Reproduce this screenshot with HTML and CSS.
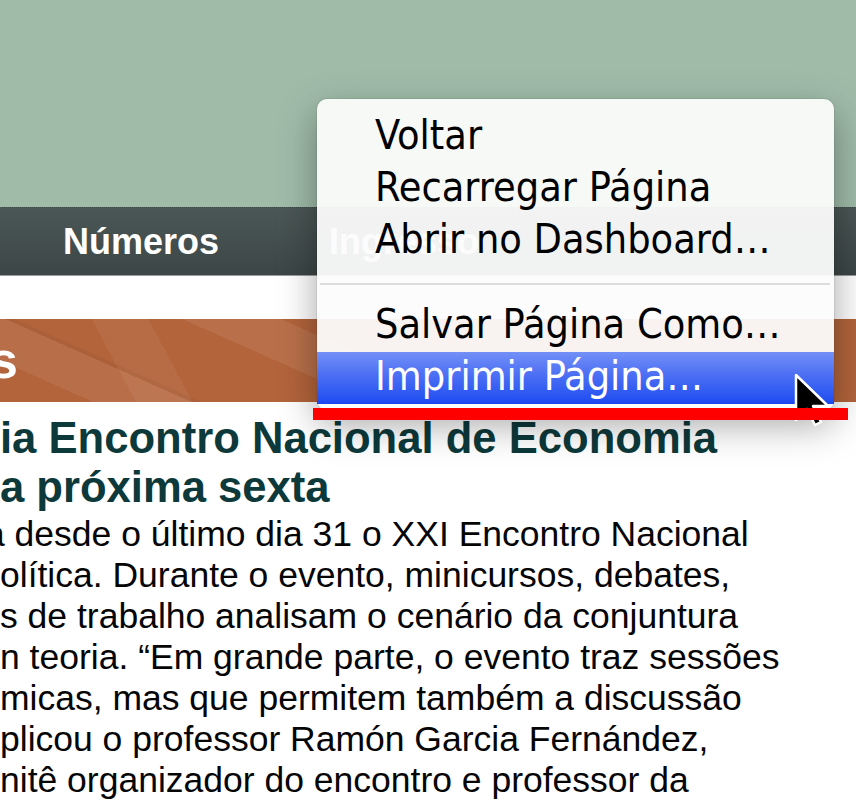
FILE: index.html
```html
<!DOCTYPE html>
<html lang="pt">
<head>
<meta charset="utf-8">
<title>Menu de contexto</title>
<link rel="stylesheet" href="styles.css">
</head>
<body>
<div class="page">
  <header class="top"></header>
  <nav class="nav">
    <a class="nav-link">Números</a>
    <a class="nav-link">Ingresso</a>
  </nav>
  <div class="spacer"></div>
  <section class="banner"><h2 class="banner-title">s</h2></section>
  <article class="story">
    <h1 class="headline">
      <span class="line">ia Encontro Nacional de Economia</span>
      <span class="line">a próxima sexta</span>
    </h1>
    <p class="text">
      <span class="line first">a desde o último dia 31 o XXI Encontro Nacional</span>
      <span class="line">olítica. Durante o evento, minicursos, debates,</span>
      <span class="line">s de trabalho analisam o cenário da conjuntura</span>
      <span class="line">n teoria. “Em grande parte, o evento traz sessões</span>
      <span class="line">micas, mas que permitem também a discussão</span>
      <span class="line">plicou o professor Ramón Garcia Fernández,</span>
      <span class="line">nitê organizador do encontro e professor da</span>
    </p>
  </article>

  <div class="menu">
    <div class="item">Voltar</div>
    <div class="item">Recarregar Página</div>
    <div class="item">Abrir no Dashboard…</div>
    <div class="sep"></div>
    <div class="item">Salvar Página Como…</div>
    <div class="item active">Imprimir Página…</div>
  </div>

  <svg class="cursor" width="40" height="56" viewBox="0 0 40 56">
    <path d="M2 2 L2 47 L13 36 L21 52 L27 49 L19 33 L34 33 Z" fill="#000" stroke="#fff" stroke-width="2.5" stroke-linejoin="round"/>
  </svg>

  <div class="mark"></div>
</div>
</body>
</html>
```

FILE: styles.css
```css
html, body {
  margin: 0;
  padding: 0;
  background: #ffffff;
}

.page {
  position: relative;
  width: 856px;
  height: 808px;
  overflow: hidden;
  background: #ffffff;
  font-family: "Liberation Sans", Arial, sans-serif;
}

.top {
  height: 207px;
  background: #a0bca9;
}

.nav {
  display: flex;
  align-items: center;
  gap: 110px;
  height: 67px;
  padding-left: 63px;
  background: linear-gradient(#4b5756, #3c4646);
  border-top: 1px dotted rgba(255, 255, 255, 0.12);
  border-bottom: 1px solid #9a9f9e;
  box-sizing: content-box;
}

.nav-link {
  color: #ffffff;
  font-weight: bold;
  font-size: 36px;
  line-height: 67px;
  text-decoration: none;
}

.spacer {
  height: 43px;
}

.banner {
  height: 83px;
  background:
    linear-gradient(24deg, transparent 0 38px, rgba(255,255,255,0.07) 38px 78px, rgba(0,0,0,0.04) 78px 82px, transparent 82px 150px, rgba(255,255,255,0.08) 150px 190px, transparent 190px),
    linear-gradient(62deg, transparent 0 120px, rgba(255,255,255,0.05) 120px 170px, transparent 170px),
    #b3643b;
}

.banner-title {
  margin: 0 0 0 -11px;
  color: #ffffff;
  font-size: 52px;
  font-weight: bold;
  line-height: 83px;
}

.story {
  padding-top: 12px;
}

.headline {
  margin: 0;
  color: #0d393b;
  font-size: 43.6px;
  font-weight: bold;
  line-height: 49px;
}

.line {
  display: block;
  white-space: nowrap;
}

.text {
  margin: 2px 0 0;
  color: #050505;
  font-size: 35.5px;
  line-height: 41px;
}

.text .first {
  text-indent: -15px;
}

.menu {
  position: absolute;
  left: 317px;
  top: 99px;
  width: 517px;
  padding: 12px 0 6px;
  background: rgba(252, 252, 252, 0.945);
  border-radius: 10px;
  box-shadow: 0 14px 38px rgba(0, 0, 0, 0.36), 0 0 0 1px rgba(0, 0, 0, 0.06);
  font-family: "DejaVu Sans Condensed", "DejaVu Sans", sans-serif;
  font-stretch: condensed;
  font-size: 41px;
  color: #000000;
}

.item {
  height: 52px;
  line-height: 48px;
  padding-left: 58px;
  white-space: nowrap;
}

.item.active {
  color: #ffffff;
  background: linear-gradient(#7390f7, #4b6ef4 45%, #2552f1 90%, #1a46ee);
}

.sep {
  height: 2px;
  margin: 16px 4px 15px 3px;
  background: #dcdcdc;
}

.cursor {
  position: absolute;
  left: 794px;
  top: 373px;
}

.mark {
  position: absolute;
  left: 313px;
  top: 408px;
  width: 535px;
  height: 12px;
  background: #ff0000;
}
```
